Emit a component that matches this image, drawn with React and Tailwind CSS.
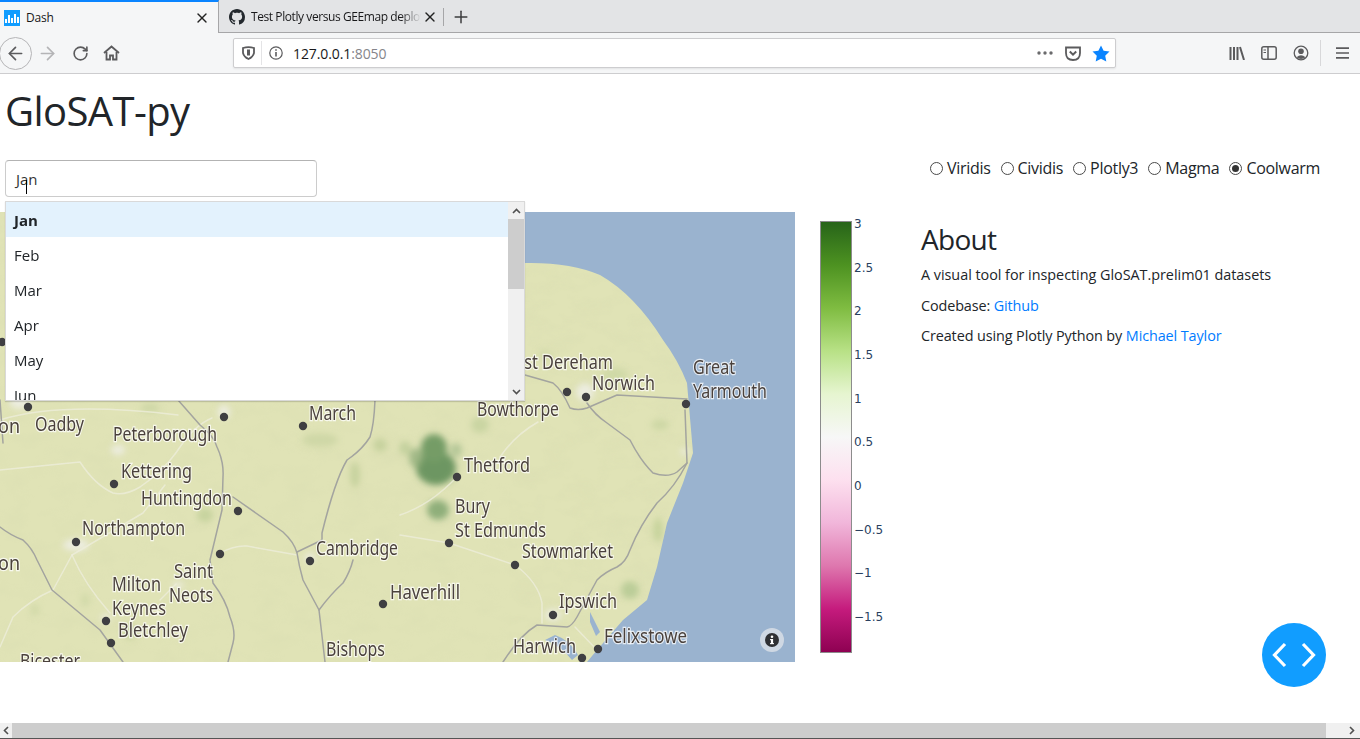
import { ArrowLeft, ArrowRight, RotateCw, X, Plus } from "lucide-react";

const SANS = "font-['Open_Sans','Noto_Sans',sans-serif]";

const MONTHS = ["Jan", "Feb", "Mar", "Apr", "May", "Jun"];
const SCALES = ["Viridis", "Cividis", "Plotly3", "Magma", "Coolwarm"];
const TICKS = ["3", "2.5", "2", "1.5", "1", "0.5", "0", "−0.5", "−1", "−1.5"];

// map coordinates below are page coordinates, the svg viewBox starts at y=212
const PLACES = [
  ["on", -2, 433, 22],
  ["Oadby", 35, 431, 49],
  ["Peterborough", 113, 441, 104],
  ["March", 309, 420, 47],
  ["Kettering", 121, 478, 71],
  ["Huntingdon", 141, 505, 91],
  ["Northampton", 82, 535, 103],
  ["on", -2, 570, 22],
  ["Saint", 174, 578, 39],
  ["Neots", 169, 602, 44],
  ["Milton", 112, 591, 49],
  ["Keynes", 112, 615, 54],
  ["Bletchley", 118, 637, 70],
  ["Bicester", 20, 668, 60],
  ["Cambridge", 316, 555, 82],
  ["Bishops", 326, 656, 59],
  ["Haverhill", 390, 599, 70],
  ["East Dereham", 506, 369, 107],
  ["Norwich", 592, 390, 63],
  ["Great", 693, 374, 42],
  ["Yarmouth", 693, 398, 74],
  ["Bowthorpe", 477, 416, 82],
  ["Thetford", 464, 472, 66],
  ["Bury", 455, 513, 35],
  ["St Edmunds", 455, 537, 91],
  ["Stowmarket", 522, 558, 91],
  ["Ipswich", 559, 608, 58],
  ["Felixstowe", 604, 643, 83],
  ["Harwich", 513, 653, 63],
];

const DOTS = [
  [2, 342], [28, 407], [224, 417], [303, 426], [114, 484], [238, 511], [76, 542], [220, 554],
  [310, 561], [106, 621], [111, 643], [383, 604], [567, 392], [586, 397], [686, 404], [457, 477],
  [449, 543], [515, 565], [553, 615], [598, 649], [582, 658],
];

const MAJOR_ROADS = [
  "M178 400L200 425Q214 436 217 447Q224 462 223 477L222 510L210 560L213 583Q226 600 230 617Q236 632 233 643L228 662",
  "M233 497L283 532Q294 542 297 553Q299 566 303 580L319 610L325 662",
  "M375 400Q374 425 370 437Q362 450 347 460Q335 480 322 533L322 540L297 552",
  "M353 560Q350 572 343 583Q330 595 319 610",
  "M0 527Q10 535 23 540Q32 548 37 560L52 590L100 630L123 662",
  "M0 400L3 443",
  "M525 375L553 383Q562 390 570 408Q578 411 587 408L617 395L687 399",
  "M587 403Q595 415 607 423L630 440Q640 460 653 473Q668 478 677 472L687 463L685 410",
  "M687 463Q675 487 657 503Q640 525 630 550Q626 562 617 567Q605 572 597 580L577 617Q572 626 567 627L537 625Q520 635 503 662",
];

const MINOR_ROADS = [
  "M400 515Q430 505 457 477",
  "M538 422Q515 435 500 457",
  "M400 535L449 543L515 565Q538 582 542 603L542 623",
  "M575 627L597 650",
  "M0 470L80 462Q95 485 113 493Q125 496 140 487Q165 470 180 447Q195 425 212 418",
  "M72 555L53 590Q30 600 13 617L0 647",
  "M72 555L143 513L165 485",
  "M72 555Q85 585 110 613",
  "M220 553Q235 545 247 546L297 555",
  "M0 420Q60 401 178 415",
  "M160 600L176 584",
];

const GREEN_PATCHES = [
  [436, 468, 20, 17, "#6d9662", 1],
  [434, 448, 13, 14, "#749c66", 1],
  [416, 458, 7, 10, "#92af7c", 0.8],
  [456, 450, 6, 7, "#a3bb8a", 0.7],
  [438, 510, 11, 10, "#86a873", 0.9],
  [405, 448, 6, 7, "#b0c48e", 0.6],
  [480, 425, 9, 8, "#b3c78f", 0.5],
  [320, 440, 18, 7, "#c8d3a0", 0.7],
  [355, 475, 5, 13, "#bccb94", 0.7],
  [380, 445, 7, 7, "#bccb94", 0.7],
  [630, 590, 9, 9, "#adc48c", 0.7],
  [660, 425, 9, 5, "#c4d29c", 0.7],
  [658, 530, 5, 12, "#bccd92", 0.7],
  [150, 408, 10, 5, "#c8d3a0", 0.7],
  [205, 515, 8, 7, "#bccd94", 0.7],
  [130, 632, 7, 7, "#bccd94", 0.7],
  [615, 375, 13, 7, "#c9d5a0", 0.7],
  [545, 355, 7, 5, "#c9d5a0", 0.6],
  [85, 600, 4, 7, "#c8d3a0", 0.6],
  [35, 610, 4, 6, "#c8d3a0", 0.6],
];

const URBAN = [
  [76, 545, 13, 6], [585, 392, 9, 9], [553, 615, 8, 6], [310, 558, 5, 5], [224, 412, 6, 7],
  [20, 402, 11, 7], [118, 450, 7, 5], [106, 618, 5, 4], [685, 452, 5, 3], [178, 585, 6, 3],
];

const LAND = "M0 212H500L524 263Q570 262 600 275Q635 295 663 340Q678 360 687 383L693 453L683 483L667 523L657 567L647 600L623 620L597 650L587 662H0Z";

function MapArea() {
  return (
    <div className="relative h-[450px] w-[795px] shrink-0 overflow-hidden">
      <svg className="block" width="795" height="450" viewBox="0 212 795 450">
        <defs>
          <filter id="soft" x="-50%" y="-50%" width="200%" height="200%">
            <feGaussianBlur stdDeviation="3" />
          </filter>
          <filter id="tile" x="-5%" y="-5%" width="110%" height="110%">
            <feGaussianBlur stdDeviation="0.45" />
          </filter>
          <filter id="relief">
            <feTurbulence type="fractalNoise" baseFrequency="0.035 0.06" numOctaves="3" seed="4" />
            <feColorMatrix values="0 0 0 0 0.6  0 0 0 0 0.64  0 0 0 0 0.4  0 0 0 1.4 -0.6" />
          </filter>
          <clipPath id="land">
            <path d={LAND} />
          </clipPath>
        </defs>
        <rect x="0" y="212" width="795" height="450" fill="#9ab3cf" />
        <path d={LAND} fill="#e0e3b6" />
        <g clipPath="url(#land)">
          <rect x="0" y="212" width="795" height="450" filter="url(#relief)" opacity="0.2" />
        </g>
        <g filter="url(#soft)" clipPath="url(#land)">
          {GREEN_PATCHES.map(([cx, cy, rx, ry, color, o], i) => (
            <ellipse key={i} cx={cx} cy={cy} rx={rx} ry={ry} fill={color} opacity={o} />
          ))}
          {URBAN.map(([cx, cy, rx, ry], i) => (
            <ellipse key={i} cx={cx} cy={cy} rx={rx} ry={ry} fill="#eeeee8" opacity="0.85" />
          ))}
        </g>
        <path d="M555 635Q570 640 578 655L572 660Q560 645 545 640ZM590 612L600 632L596 636L590 622Z" fill="#9ab3cf" />
        <g fill="none" strokeLinejoin="round" strokeLinecap="round" filter="url(#tile)">
          {MINOR_ROADS.map((d, i) => (
            <path key={i} d={d} stroke="#eeeedc" strokeOpacity="0.75" strokeWidth="1.5" />
          ))}
          {MAJOR_ROADS.map((d, i) => (
            <path key={i} d={d} stroke="#a3a49f" strokeWidth="1.5" />
          ))}
        </g>
        {DOTS.map(([cx, cy], i) => (
          <circle key={i} cx={cx} cy={cy} r="4.2" fill="#3f3f42" />
        ))}
        <g fontFamily="Noto Sans, sans-serif" fontSize="20" fill="#4a413c">
          {PLACES.map(([name, x, y, w]) => (
            <text
              key={name + x}
              x={x}
              y={y}
              textLength={w}
              lengthAdjust="spacingAndGlyphs"
              stroke="#ffffff"
              strokeOpacity="0.75"
              strokeWidth="2.5"
              paintOrder="stroke"
            >
              {name}
            </text>
          ))}
        </g>
      </svg>
      <div className="absolute right-[11px] bottom-[10px] flex h-6 w-6 items-center justify-center rounded-full bg-[#cfd8e3]">
        <svg width="16" height="16" viewBox="0 0 16 16">
          <circle cx="8" cy="8" r="7" fill="#2f3033" />
          <rect x="6.9" y="7" width="2.2" height="5" fill="#fff" />
          <rect x="6.1" y="7" width="2" height="1.2" fill="#fff" />
          <rect x="6.1" y="11" width="3.8" height="1.2" fill="#fff" />
          <circle cx="8" cy="4.8" r="1.3" fill="#fff" />
        </svg>
      </div>
    </div>
  );
}

function ColorBar() {
  return (
    <div className="ml-[25px] flex h-[432px] shrink-0 pt-[9px]">
      <div className="h-[432px] w-[32px] border border-[#8c8c8c] bg-[linear-gradient(to_bottom,#276419_0%,#4d9221_10%,#7fbc41_20%,#b8e186_30%,#e6f5d0_40%,#f7f7f7_50%,#fde0ef_60%,#f1b6da_70%,#de77ae_80%,#c51b7d_90%,#8e0152_100%)]" />
      <div className="ml-[2px] flex h-[432px] w-[48px] flex-col justify-between pb-[33px] font-['DejaVu_Sans',sans-serif] text-[12px] leading-[6px] text-[#2a3f5f]">
        {TICKS.map((t) => (
          <span key={t}>{t}</span>
        ))}
      </div>
    </div>
  );
}

function About() {
  return (
    <div className="ml-[19px] pt-[10px] text-[14.4px] tracking-[-0.03px] text-[#212529]">
      <h3 className="mb-[8px] text-[28px] leading-[34px] tracking-[-0.7px]">About</h3>
      <p className="mb-[9px] leading-[22px]">A visual tool for inspecting GloSAT.prelim01 datasets</p>
      <p className="mb-[8px] leading-[22px] tracking-[-0.12px]">
        Codebase: <a className="text-[#007bff]">Github</a>
      </p>
      <p className="leading-[22px] tracking-[-0.1px]">
        Created using Plotly Python by <a className="text-[#007bff]">Michael Taylor</a>
      </p>
    </div>
  );
}

function Radio({ label, checked }) {
  return (
    <label className="flex items-center gap-[4px]">
      <span className="flex h-[13px] w-[13px] items-center justify-center rounded-full border border-[#4a4a4a] bg-white">
        {checked && <span className="h-[7px] w-[7px] rounded-full bg-[#333]" />}
      </span>
      {label}
    </label>
  );
}

function Dropdown() {
  return (
    <div className="relative ml-[5px] w-[312px]">
      <div className="flex h-[37px] items-center rounded-[4px] border border-[#ccc] border-t-[#b3b3b3] pt-[2px] pl-[10px] text-[#333]">
        Jan
      </div>
      <div className="absolute top-[20px] left-[21px] h-[14px] w-px bg-black" />
      <div className="absolute top-[41px] left-0 z-10 flex h-[200px] w-[520px] overflow-hidden border border-[#d9d9d9] bg-white shadow-[0_1px_1px_rgba(0,0,0,0.15)]">
        <ul className="min-w-0 flex-1">
          {MONTHS.map((m, i) => (
            <li
              key={m}
              className={
                i === 0
                  ? "flex h-[35px] items-center bg-[#e3f2fd] pt-[2px] pl-[8px] font-bold text-[#212529]"
                  : "flex h-[35px] items-center pt-[2px] pl-[8px] text-[#212529]"
              }
            >
              {m}
            </li>
          ))}
        </ul>
        <div className="flex w-[16px] shrink-0 flex-col bg-[#f0f0f0]">
          <div className="flex h-[17px] items-center justify-center">
            <svg width="9" height="6" viewBox="0 0 9 6">
              <path d="M1 5L4.5 1.5L8 5" fill="none" stroke="#505050" strokeWidth="1.6" />
            </svg>
          </div>
          <div className="h-[70px] bg-[#cdcdcd]" />
          <div className="mt-auto flex h-[17px] items-center justify-center">
            <svg width="9" height="6" viewBox="0 0 9 6">
              <path d="M1 1L4.5 4.5L8 1" fill="none" stroke="#505050" strokeWidth="1.6" />
            </svg>
          </div>
        </div>
      </div>
    </div>
  );
}

function GithubMark() {
  return (
    <svg width="16" height="16" viewBox="0 0 16 16" fill="#24292e">
      <path d="M8 0C3.58 0 0 3.58 0 8c0 3.54 2.29 6.53 5.47 7.59.4.07.55-.17.55-.38 0-.19-.01-.82-.01-1.49-2.01.37-2.53-.49-2.69-.94-.09-.23-.48-.94-.82-1.13-.28-.15-.68-.52-.01-.53.63-.01 1.08.58 1.23.82.72 1.21 1.87.87 2.33.66.07-.52.28-.87.51-1.07-1.78-.2-3.64-.89-3.64-3.95 0-.87.31-1.59.82-2.15-.08-.2-.36-1.02.08-2.12 0 0 .67-.21 2.2.82.64-.18 1.32-.27 2-.27s1.36.09 2 .27c1.53-1.04 2.2-.82 2.2-.82.44 1.1.16 1.92.08 2.12.51.56.82 1.27.82 2.15 0 3.07-1.87 3.75-3.65 3.95.29.25.54.73.54 1.48 0 1.07-.01 1.93-.01 2.2 0 .21.15.46.55.38A8.01 8.01 0 0016 8c0-4.42-3.58-8-8-8z" />
    </svg>
  );
}

function TabBar() {
  return (
    <div className="flex h-[33px] bg-[#e3e4e6] text-[12px] text-[#18181a]">
      <div className="flex h-[33px] w-[219px] shrink-0 items-center border-t-2 border-r border-t-[#0a84ff] border-r-[#a6a6a8] bg-[#f5f6f7] pr-[8px] pl-[4px]">
        <span className="flex h-4 w-4 items-end justify-center gap-[1.5px] bg-[#119dff] pb-[3px]">
          <span className="h-[4px] w-[1.5px] bg-white" />
          <span className="h-[8px] w-[1.5px] bg-white" />
          <span className="h-[5px] w-[1.5px] bg-white" />
          <span className="h-[9px] w-[1.5px] bg-white" />
          <span className="h-[6px] w-[1.5px] bg-white" />
        </span>
        <span className="ml-[6px] flex-1 tracking-[-0.2px]">Dash</span>
        <X size={16} strokeWidth={2} className="text-[#222]" />
      </div>
      <div className="flex h-[33px] flex-1 items-center border-b border-[#a6a6a8] pt-px">
        <div className="flex w-[225px] items-center border-r border-[#a6a6a8] pr-[5px] pl-[10px]">
          <GithubMark />
          <span className="ml-[6px] w-[170px] overflow-hidden tracking-[-0.42px] whitespace-nowrap [mask-image:linear-gradient(to_right,black_88%,transparent)]">
            Test Plotly versus GEEmap deployment
          </span>
          <X size={16} strokeWidth={2} className="ml-[1px] text-[#222]" />
        </div>
        <Plus size={20} strokeWidth={1.8} className="ml-[7px] text-[#3c3c3e]" />
      </div>
    </div>
  );
}

function Toolbar() {
  return (
    <div className="flex h-[41px] items-center border-b border-[#cdcdcf] bg-[#f5f6f7] text-[#5b5b5d]">
      <div className="-ml-[1px] flex h-[33px] w-[33px] shrink-0 items-center justify-center rounded-full border border-[#b5b5b7] bg-[#f5f6f7]">
        <ArrowLeft size={21} strokeWidth={1.9} />
      </div>
      <ArrowRight size={21} strokeWidth={1.9} className="ml-[5px] text-[#b4b4b6]" />
      <RotateCw size={17} strokeWidth={2.3} className="ml-[14px]" />
      <svg className="ml-[14px]" width="17" height="16" viewBox="0 0 17 16" fill="none" stroke="currentColor" strokeWidth="1.8">
        <path d="M1 8L8.5 1.5L16 8" />
        <path d="M3.5 7V14.5H7V10.5H10V14.5H13.5V7" />
      </svg>
      <div className="ml-[113px] flex h-[30px] w-[883px] shrink-0 items-center rounded-[2px] border border-[#cdcdcf] bg-white shadow-[0_1px_2px_rgba(0,0,0,0.08)]">
        <svg className="ml-[8px]" width="13" height="14" viewBox="0 0 13 14" fill="none" stroke="currentColor" strokeWidth="1.8">
          <path d="M1 2Q6.5 0.2 12 2V7Q11 11 6.5 13Q2 11 1 7Z" />
          <path d="M6.5 3.5V9.5" strokeWidth="3" />
        </svg>
        <span className="ml-[6px] h-[24px] w-px bg-[#e4e4e6]" />
        <svg className="ml-[7px]" width="14" height="14" viewBox="0 0 14 14" fill="none" stroke="currentColor">
          <circle cx="7" cy="7" r="6.2" strokeWidth="1.2" />
          <path d="M7 6V10.5" strokeWidth="1.6" />
          <path d="M7 3.2V4.8" strokeWidth="1.6" />
        </svg>
        <span className="ml-[10px] text-[14px] tracking-[-0.1px] text-[#18181a]">
          127.0.0.1<span className="text-[#85858a]">:8050</span>
        </span>
        <div className="ml-auto flex items-center pr-[5px]">
          <svg width="16" height="4" viewBox="0 0 16 4" fill="#6a6a6c">
            <circle cx="2" cy="2" r="1.7" />
            <circle cx="8" cy="2" r="1.7" />
            <circle cx="14" cy="2" r="1.7" />
          </svg>
          <svg className="ml-[12px]" width="16" height="15" viewBox="0 0 16 15" fill="none" stroke="currentColor" strokeWidth="1.8">
            <path d="M1 1.5H15V7Q15 14 8 14Q1 14 1 7Z" />
            <path d="M4.8 5.5L8 8.7L11.2 5.5" strokeWidth="2" />
          </svg>
          <svg className="ml-[11px]" width="18" height="17" viewBox="0 0 18 17" fill="#0a84ff">
            <path d="M9 .5L11.6 5.8L17.5 6.6L13.2 10.7L14.3 16.5L9 13.7L3.7 16.5L4.8 10.7L.5 6.6L6.4 5.8Z" />
          </svg>
        </div>
      </div>
      <svg className="ml-[113px]" width="16" height="14" viewBox="0 0 16 14" fill="none" stroke="currentColor" strokeWidth="2">
        <path d="M1.5 1V14M5 1V14M8.5 1V14M11 1L15 14" />
      </svg>
      <svg className="ml-[16px]" width="16" height="14" viewBox="0 0 16 14" fill="none" stroke="currentColor" strokeWidth="1.5">
        <rect x=".8" y=".8" width="14.4" height="12.4" rx="2" />
        <path d="M7 1V13" />
        <path d="M2.5 4H5M2.5 6.5H5" strokeWidth="1" />
      </svg>
      <svg className="ml-[16px]" width="16" height="16" viewBox="0 0 16 16" fill="none" stroke="currentColor">
        <circle cx="8" cy="8" r="6.8" strokeWidth="1.3" />
        <circle cx="8" cy="6.3" r="2.8" fill="currentColor" stroke="none" />
        <path d="M3.5 12.3Q8 8 12.5 12.3Q8 15.6 3.5 12.3Z" fill="currentColor" stroke="none" />
      </svg>
      <span className="ml-[11px] h-[26px] w-px bg-[#d8d8da]" />
      <svg className="ml-[15px]" width="13" height="12" viewBox="0 0 13 12" stroke="currentColor" strokeWidth="1.7">
        <path d="M0 1.2H13M0 6H13M0 10.8H13" />
      </svg>
    </div>
  );
}

function BottomScrollbar() {
  return (
    <div className="flex h-[16px] items-stretch border-b border-[#555] bg-[#f0f0f0]">
      <div className="flex w-[12px] items-center justify-center">
        <svg width="6" height="9" viewBox="0 0 6 9">
          <path d="M5 1L1.5 4.5L5 8" fill="none" stroke="#505050" strokeWidth="1.6" />
        </svg>
      </div>
      <div className="w-[1314px] bg-[#cdcdcd]" />
      <div className="ml-auto flex w-[17px] items-center justify-center">
        <svg width="6" height="9" viewBox="0 0 6 9">
          <path d="M1 1L4.5 4.5L1 8" fill="none" stroke="#505050" strokeWidth="1.6" />
        </svg>
      </div>
    </div>
  );
}

export default function App() {
  return (
    <div className={`relative flex h-[739px] w-[1360px] flex-col overflow-hidden bg-white text-[15px] text-[#212529] ${SANS}`}>
      <TabBar />
      <Toolbar />
      <main className="min-h-0 flex-1">
        <h1 className="pt-[13px] pl-[5px] text-[40px] leading-[48px] tracking-[-0.6px]">GloSAT-py</h1>
        <div className="mt-[25px] flex h-[52px] items-start justify-between pr-[40px]">
          <Dropdown />
          <div className="-mt-px flex gap-[10px] text-[16px] leading-[18px] tracking-[-0.3px]">
            {SCALES.map((s) => (
              <Radio key={s} label={s} checked={s === "Coolwarm"} />
            ))}
          </div>
        </div>
        <div className="flex">
          <MapArea />
          <ColorBar />
          <About />
        </div>
      </main>
      <BottomScrollbar />
      <button
        type="button"
        className="absolute top-[623px] left-[1262px] flex h-16 w-16 items-center justify-center rounded-full bg-[#119dff]"
      >
        <svg width="44" height="26" viewBox="0 0 44 26" fill="none" stroke="#fff" strokeWidth="3.2">
          <path d="M13 2L2.5 13L13 24" />
          <path d="M31 2L41.5 13L31 24" />
        </svg>
      </button>
    </div>
  );
}
